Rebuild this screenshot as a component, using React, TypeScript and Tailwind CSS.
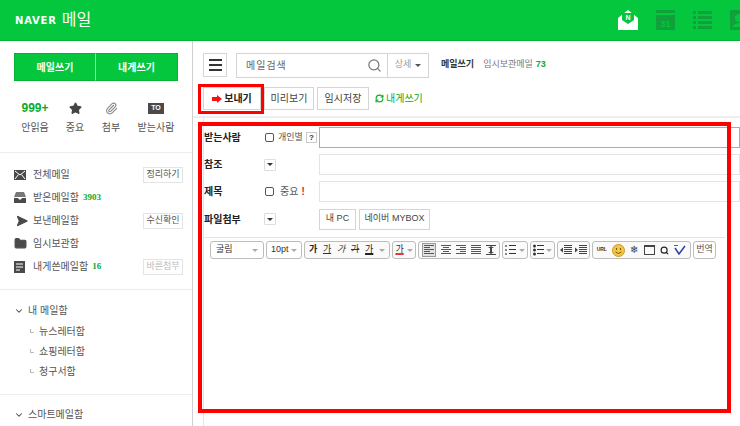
import { Search, ChevronDown, RefreshCw, Paperclip, Star, Send, Folder } from 'lucide-react';

const font = { fontFamily: '"Liberation Sans", "Noto Sans CJK KR", sans-serif' };

function Caret({ className = 'border-t-[#555]' }: { className?: string }) {
  return <span className={`inline-block w-0 h-0 border-x-[3px] border-x-transparent border-t-[3px] ${className}`} />;
}

function SideRow({ icon, label, count, action, faded }: { icon: React.ReactNode; label: string; count?: string; action?: string; faded?: boolean }) {
  return (
    <div className="h-[23px] flex items-center pl-[14px] pr-[9px]">
      <span className="w-[19px] flex text-[#4a4a4a]">{icon}</span>
      <span className="text-[10px] text-[#555]">{label}</span>
      {count && <span className="ml-1 text-[9px] font-bold text-[#09aa2c]" style={{ fontFamily: '"Liberation Serif", serif' }}>{count}</span>}
      {action && (
        <span className={`ml-auto w-[40px] h-[16px] flex items-center justify-center border border-[#e4e4e4] text-[9px] ${faded ? 'text-[#bbb]' : 'text-[#555]'}`}>{action}</span>
      )}
    </div>
  );
}

function Stat({ top, label, w }: { top: React.ReactNode; label: string; w: string }) {
  return (
    <div className={`flex flex-col items-center ${w}`}>
      <div className="h-[18px] flex items-center">{top}</div>
      <div className="mt-[3px] text-[10px] text-[#555] whitespace-nowrap">{label}</div>
    </div>
  );
}

function FormRow({ label, h, children, field, active }: { label: string; h: string; children?: React.ReactNode; field?: React.ReactNode; active?: boolean }) {
  return (
    <div className={`flex items-center ${h}`}>
      <span className="w-[60px] text-[10px] font-bold text-[#222]">{label}</span>
      <div className="w-[55px] flex items-center">{children}</div>
      {field ?? <div className={`flex-1 h-[21px] border ${active ? 'border-[#6fd28a]' : 'border-[#e4e4e4]'}`} />}
    </div>
  );
}

function Check() {
  return <span className="w-[9px] h-[9px] rounded-[2px] border border-[#555] bg-white mr-[4px] ml-[1px] shrink-0" />;
}

function SmallDrop() {
  return (
    <span className="w-[12px] h-[12px] border border-[#ddd] rounded-[1px] flex items-center justify-center">
      <Caret className="border-t-[#333]" />
    </span>
  );
}

function Group({ children, w }: { children: React.ReactNode; w: string }) {
  return <div className={`h-[18px] shrink-0 flex items-center justify-around px-[1px] border border-[#bdbdbd] rounded-[3px] bg-[#fafafa] ${w}`}>{children}</div>;
}

function Lines({ kind }: { kind: 'left' | 'center' | 'right' | 'justify' }) {
  return (
    <svg width="10" height="10" viewBox="0 0 10 10" className="shrink-0">
      {[0, 1, 2, 3, 4].map((i) => {
        const short = i % 2 === 1 && kind !== 'justify';
        const x = !short ? 0 : kind === 'left' ? 0 : kind === 'center' ? 2 : 4;
        return <rect key={i} x={x} y={i * 2} width={short ? 6 : 10} height="1" fill="#555" />;
      })}
    </svg>
  );
}

function LineHeight() {
  return (
    <svg width="10" height="10" viewBox="0 0 10 10" className="shrink-0" fill="#444">
      <rect width="10" height="1" /><rect y="9" width="10" height="1" /><rect x="4" y="2" width="2" height="6" />
      <path d="M2 3 H8 L5 1 Z M2 7 H8 L5 9 Z" />
    </svg>
  );
}

function ListIcon({ numbered }: { numbered?: boolean }) {
  return (
    <svg width="11" height="12" viewBox="0 0 11 12" className="shrink-0" fill="#333">
      {[1, 5, 9].map((y) =>
        numbered ? <rect key={y} x="0" y={y} width="2" height="2" fill="#888" /> : <circle key={y} cx="1.5" cy={y + 1} r="1.5" />
      )}
      {[1, 5, 9].map((y) => <rect key={y} x="4" y={y} width="7" height="1" />)}
    </svg>
  );
}

function IndentIcon({ out }: { out?: boolean }) {
  return (
    <svg width="12" height="10" viewBox="0 0 12 10" className="shrink-0" fill="#444">
      {[0, 2, 4, 6, 8].map((y) => <rect key={y} x="4" y={y} width="8" height="1" />)}
      <path d={out ? 'M0 5 L3 2.5 V7.5 Z' : 'M3 5 L0 2.5 V7.5 Z'} />
    </svg>
  );
}

export default function App() {
  return (
    <div className="w-[740px] h-[426px] relative overflow-hidden bg-white flex flex-col" style={font}>
      <header className="h-[41px] shrink-0 bg-[#04c73d] border-b border-[#03b236] flex items-center pl-[15px]">
        <span className="text-[10px] font-bold text-white tracking-[0.8px]" style={{ fontFamily: '"DejaVu Sans", sans-serif' }}>NAVER</span>
        <span className="ml-[5px] text-[16px] text-white leading-none">메일</span>
        <div className="ml-auto flex items-center gap-[18px] w-[122px] shrink-0 overflow-hidden">
          <svg width="20" height="22" viewBox="0 0 20 22" className="shrink-0">
            <path d="M0 9 L10 1 L20 9 V21 H0 Z" fill="#fff" />
            <path d="M4 4 H16 V11 L10 15 L4 11 Z" fill="#04c73d" />
            <text x="10" y="10.5" fontSize="7" fontWeight="700" fill="#fff" textAnchor="middle">N</text>
          </svg>
          <svg width="19" height="20" viewBox="0 0 19 20" className="shrink-0">
            <rect width="19" height="3" fill="#10a03c" />
            <rect y="5" width="19" height="15" fill="#10a03c" />
            <text x="9.5" y="16.5" fontSize="9" fontWeight="700" fill="#04c73d" textAnchor="middle">31</text>
          </svg>
          <svg width="19" height="18" viewBox="0 0 19 18" className="shrink-0" fill="#10a03c">
            <rect width="3" height="3" /><rect x="5" width="14" height="3" />
            <rect y="5" width="3" height="3" /><rect x="5" y="5" width="14" height="3" />
            <rect y="10" width="3" height="3" /><rect x="5" y="10" width="14" height="3" />
            <rect y="15" width="3" height="3" /><rect x="5" y="15" width="14" height="3" />
          </svg>
          <svg width="19" height="20" viewBox="0 0 19 20" className="shrink-0">
            <rect width="19" height="20" fill="#10a03c" />
            <circle cx="9" cy="8" r="4" fill="#04c73d" />
            <path d="M2 17 Q9 9 16 17 Z" fill="#04c73d" />
          </svg>
        </div>
      </header>

      <div className="flex-1 flex min-h-0">
        <aside className="w-[193px] shrink-0 border-r border-[#cfcfcf] flex flex-col">
          <div className="mt-[12px] mx-[14px] h-[28px] flex">
            <div className="w-[82px] flex items-center justify-center bg-[#04c73d] border border-[#03b236] border-r-[#9adfae] text-[10px] font-bold text-white">메일쓰기</div>
            <div className="w-[82px] flex items-center justify-center bg-[#04c73d] border border-[#03b236] border-l-0 text-[10px] font-bold text-white">내게쓰기</div>
          </div>
          <div className="mt-[18px] pl-[15px] flex items-start">
            <Stat w="w-[40px]" label="안읽음" top={<span className="text-[12px] font-bold text-[#09aa2c]">999+</span>} />
            <Stat w="w-[40px]" label="중요" top={<Star size={13} fill="#444" stroke="#444" />} />
            <Stat w="w-[32px]" label="첨부" top={<Paperclip size={13} stroke="#888" />} />
            <Stat w="w-[58px]" label="받는사람" top={<span className="w-[16px] h-[11px] bg-[#4a4a4a] text-white text-[7px] font-bold flex items-center justify-center">TO</span>} />
          </div>
          <div className="mt-[17px] h-px bg-[#ececec]" />
          <div className="pt-[10px] pb-[11px]">
            <SideRow
              label="전체메일"
              action="정리하기"
              icon={
                <svg width="12" height="10" viewBox="0 0 12 10">
                  <rect width="12" height="10" fill="#4a4a4a" />
                  <path d="M1 1 L6 5 L11 1 M1 9 L4.5 4.5 M11 9 L7.5 4.5" stroke="#fff" fill="none" />
                </svg>
              }
            />
            <SideRow
              label="받은메일함"
              count="3903"
              icon={
                <svg width="12" height="11" viewBox="0 0 12 11">
                  <path d="M2 0 H10 L12 5 H0 Z" fill="#777" />
                  <path d="M0 6 H4 L5 7.5 H7 L8 6 H12 V11 H0 Z" fill="#4a4a4a" />
                </svg>
              }
            />
            <SideRow icon={<Send size={12} fill="#4a4a4a" stroke="#4a4a4a" className="rotate-45" />} label="보낸메일함" action="수신확인" />
            <SideRow icon={<Folder size={13} fill="#4a4a4a" stroke="#4a4a4a" />} label="임시보관함" />
            <SideRow
              label="내게쓴메일함"
              count="16"
              action="바른첨부"
              faded
              icon={
                <svg width="11" height="12" viewBox="0 0 11 12">
                  <rect width="11" height="12" fill="#4a4a4a" />
                  <path d="M2 3 H9 M2 6 H9 M2 9 H6" stroke="#fff" />
                </svg>
              }
            />
          </div>
          <div className="h-px bg-[#ececec]" />
          <div className="pt-[10px] pb-[13px]">
            <div className="h-[21px] flex items-center pl-[14px] text-[10px] text-[#555]">
              <ChevronDown size={10} stroke="#444" strokeWidth={2.5} className="mr-[4px]" />내 메일함
            </div>
            {['뉴스레터함', '쇼핑레터함', '청구서함'].map((name) => (
              <div key={name} className="h-[20px] flex items-center pl-[30px] text-[10px] text-[#555] first-of-type:mt-px">
                <span className="w-[4px] h-[4px] mr-[5px] border-l border-b border-[#bbb]" />{name}
              </div>
            ))}
          </div>
          <div className="h-px bg-[#ececec]" />
          <div className="h-[21px] mt-[9px] flex items-center pl-[14px] text-[10px] text-[#555]">
            <ChevronDown size={10} stroke="#444" strokeWidth={2.5} className="mr-[4px]" />스마트메일함
          </div>
        </aside>

        <main className="flex-1 min-w-0 flex flex-col">
          <div className="h-[43px] shrink-0 flex items-center pl-[10px] pt-[5px]">
            <div className="w-[24px] h-[24px] border border-[#d5d5d5] flex flex-col items-center justify-center gap-[3px]">
              <span className="w-[13px] h-[2px] bg-[#333]" /><span className="w-[13px] h-[2px] bg-[#333]" /><span className="w-[13px] h-[2px] bg-[#333]" />
            </div>
            <div className="ml-[9px] w-[152px] h-[25px] border border-[#d5d5d5] flex items-center pl-[9px] pr-[5px] text-[10px] text-[#666] tracking-[1px]">
              메일검색
              <Search size={15} stroke="#777" className="ml-auto" />
            </div>
            <div className="w-[41px] h-[25px] border border-l-0 border-[#d5d5d5] flex items-center justify-center gap-[4px] text-[9px] text-[#999]">
              상세<Caret />
            </div>
            <span className="ml-[12px] text-[9px] font-bold text-[#333]">메일쓰기</span>
            <span className="ml-[9px] text-[9px] text-[#777]">임시보관메일</span>
            <span className="ml-[3px] text-[9px] font-bold text-[#09aa2c]">73</span>
          </div>
          <div className="h-[34px] shrink-0 flex items-start pt-[3px] pl-[10px] border-b-2 border-[#eee]">
            <div className="w-[58px] h-[23px] border border-[#d5d5d5] flex items-center justify-center text-[10px] font-bold text-[#222]">
              <svg width="10" height="8" viewBox="0 0 10 8" className="mr-[2px]">
                <path d="M0 2 H5 V0 L10 4 L5 8 V6 H0 Z" fill="#f01414" />
              </svg>
              보내기
            </div>
            <div className="ml-[3px] w-[50px] h-[23px] border border-[#d5d5d5] flex items-center justify-center text-[10px] text-[#444]">미리보기</div>
            <div className="ml-[3px] w-[52px] h-[23px] border border-[#d5d5d5] flex items-center justify-center text-[10px] text-[#444]">임시저장</div>
            <div className="h-[23px] flex items-center ml-[6px]">
              <RefreshCw size={9} stroke="#09aa2c" strokeWidth={3} className="mr-[2px]" />
              <span className="text-[10px] text-[#09aa2c]">내게쓰기</span>
            </div>
          </div>
          <div className="flex-1 min-h-0 ml-[10px] border-l border-[#e4e4e4]">
            <div className="pt-[6px]">
              <FormRow label="받는사람" h="h-[27px]" active>
                <Check /><span className="text-[9px] text-[#555] mr-[3px] whitespace-nowrap">개인별</span>
                <span className="w-[11px] h-[11px] border border-[#ccc] text-[8px] font-bold text-[#333] flex items-center justify-center shrink-0">?</span>
              </FormRow>
              <FormRow label="참조" h="h-[27px]"><SmallDrop /></FormRow>
              <FormRow label="제목" h="h-[27px]">
                <Check /><span className="text-[10px] text-[#555] ml-[2px] mr-[3px]">중요</span><span className="text-[10px] font-bold text-[#f01414]">!</span>
              </FormRow>
              <FormRow
                label="파일첨부"
                h="h-[28px]"
                field={
                  <div className="flex gap-[3px]">
                    <div className="w-[37px] h-[21px] border border-[#d5d5d5] flex items-center justify-center text-[9px] text-[#444]">내 PC</div>
                    <div className="w-[71px] h-[21px] border border-[#d5d5d5] flex items-center justify-center text-[9px] text-[#444] whitespace-nowrap">네이버 MYBOX</div>
                  </div>
                }
              >
                <SmallDrop />
              </FormRow>
            </div>
            <div className="border-t border-[#e4e4e4] mr-[15px] h-[25px] mt-[4px] flex items-center pl-[6px] gap-[2px]">
              <div className="w-[54px] h-[18px] shrink-0 border border-[#bdbdbd] rounded-[3px] flex items-center justify-between px-[5px] text-[9px] text-[#333]">굴림<Caret className="border-t-[#aaa]" /></div>
              <div className="w-[36px] h-[18px] shrink-0 border border-[#bdbdbd] rounded-[3px] flex items-center justify-between px-[4px] text-[9px] text-[#333]">10pt<Caret className="border-t-[#aaa]" /></div>
              <Group w="w-[86px]">
                <span className="text-[9px] font-bold text-[#222]">가</span>
                <span className="text-[9px] text-[#333] underline">가</span>
                <span className="text-[9px] italic text-[#333]">가</span>
                <span className="text-[9px] text-[#333] line-through">가</span>
                <span className="text-[9px] text-[#222] underline decoration-2">가</span>
                <Caret className="border-t-[#aaa]" />
              </Group>
              <Group w="w-[24px]">
                <span className="text-[9px] text-[#333] underline decoration-[#e33] decoration-2">가</span>
                <Caret className="border-t-[#aaa]" />
              </Group>
              <Group w="w-[82px]">
                <span className="w-[14px] h-[14px] bg-[#e2e2e2] border border-[#999] flex items-center justify-center"><Lines kind="left" /></span>
                <Lines kind="center" /><Lines kind="right" /><Lines kind="justify" /><LineHeight />
              </Group>
              <Group w="w-[26px]"><ListIcon numbered /><Caret className="border-t-[#aaa]" /></Group>
              <Group w="w-[25px]"><ListIcon /><Caret className="border-t-[#aaa]" /></Group>
              <Group w="w-[33px]"><IndentIcon out /><IndentIcon /></Group>
              <Group w="w-[99px]">
                <span className="text-[5px] font-bold text-[#333]">URL</span>
                <svg width="13" height="13" viewBox="0 0 13 13" className="shrink-0">
                  <circle cx="6.5" cy="6.5" r="6" fill="#f5c542" stroke="#c9962a" />
                  <rect x="4" y="4" width="1" height="2" fill="#7a5a10" /><rect x="8" y="4" width="1" height="2" fill="#7a5a10" />
                  <path d="M3.5 8 Q6.5 11 9.5 8" stroke="#7a5a10" fill="none" />
                </svg>
                <span className="text-[10px] text-[#444] leading-none">❄</span>
                <span className="w-[11px] h-[10px] border border-[#444] border-t-2" />
                <Search size={9} stroke="#222" strokeWidth={3} />
                <svg width="12" height="10" viewBox="0 0 12 10" className="shrink-0">
                  <path d="M1 3 L5 9 L11 1" stroke="#2b3fa8" strokeWidth="1.5" fill="none" />
                  <rect x="0" y="0" width="4" height="1" fill="#d33" />
                </svg>
              </Group>
              <div className="w-[23px] h-[18px] shrink-0 border border-[#bdbdbd] rounded-[3px] flex items-center justify-center text-[9px] text-[#555] whitespace-nowrap">번역</div>
            </div>
          </div>
        </main>
      </div>

      {/* red annotation boxes drawn over the screenshot */}
      <div className="absolute left-[198px] top-[84px] w-[66px] h-[30px] border-[3px] border-[#ff0000]" />
      <div className="absolute left-[198px] top-[122px] w-[533px] h-[291px] border-4 border-[#ff0000]" />
    </div>
  );
}
